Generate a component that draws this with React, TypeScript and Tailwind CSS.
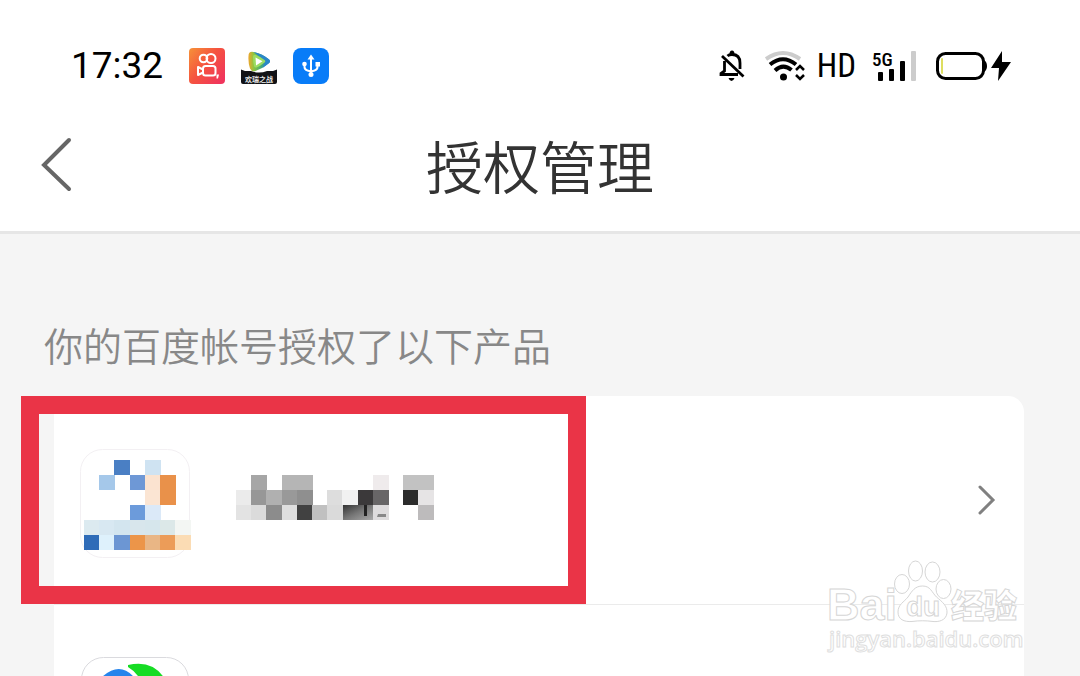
import React from "react";

type Cell = [number, number, string];

const iconCells: Cell[] = [
  [2, 0, "#4a7fc4"],
  [4, 0, "#cfe3f2"],
  [1, 1, "#a5c8ea"],
  [3, 1, "#6e98d6"],
  [4, 1, "#fbe3d0"],
  [5, 1, "#e9914a"],
  [4, 2, "#fbe5d3"],
  [5, 2, "#e9914a"],
  [3, 3, "#6c9bdb"],
  [4, 3, "#dbe9f8"],
  [0, 4, "#dceaf0"],
  [1, 4, "#d8e8f2"],
  [2, 4, "#d3e5ef"],
  [3, 4, "#d8e6ec"],
  [4, 4, "#d6e6ec"],
  [5, 4, "#dce8e8"],
  [6, 4, "#f3f6f3"],
  [0, 5, "#2f6cb8"],
  [1, 5, "#def1fc"],
  [2, 5, "#6c96d3"],
  [3, 5, "#ec9549"],
  [4, 5, "#e9b685"],
  [5, 5, "#ec9c58"],
  [6, 5, "#fbdcb4"],
];

const nameCells: Cell[] = [
  [1, 0, "#a6a6a6"],
  [3, 0, "#b5b5b5"],
  [4, 0, "#b5b5b5"],
  [9, 0, "#efebec"],
  [11, 0, "#c2c2c2"],
  [12, 0, "#c2c2c2"],
  [0, 1, "#ebebeb"],
  [1, 1, "#979797"],
  [2, 1, "#b0b0b0"],
  [3, 1, "#999999"],
  [4, 1, "#8f8f8f"],
  [6, 1, "#dddddd"],
  [7, 1, "#f1f1f1"],
  [8, 1, "#3b393a"],
  [9, 1, "#686667"],
  [11, 1, "#2c2c2c"],
  [12, 1, "#e6e4e5"],
  [0, 2, "#e3e3e3"],
  [1, 2, "#dbdbdb"],
  [2, 2, "#8c8c8c"],
  [3, 2, "#dedede"],
  [4, 2, "#414141"],
  [5, 2, "#c0c0c0"],
  [6, 2, "#dadada"],
  [9, 2, "#dedcdd"],
  [12, 2, "#bdbbbc"],
];

const StatusBar: React.FC = () => {
  return (
    <div className="flex items-center justify-between pt-11 pl-[71px] pr-[69px] text-black">
      <div className="flex items-center">
        <time className="mr-[26px] font-[Roboto,sans-serif] text-[37px] leading-[44px]">
          17:32
        </time>
        <div className="flex items-center gap-4">
          <svg width="36" height="36" viewBox="0 0 36 36" fill="none">
            <defs>
              <linearGradient id="camera" x1="0" y1="0" x2="1" y2="0.8">
                <stop offset="0" stopColor="#f69238" />
                <stop offset="0.5" stopColor="#f5533f" />
                <stop offset="1" stopColor="#f0355c" />
              </linearGradient>
            </defs>
            <rect width="36" height="36" rx="4" fill="url(#camera)" />
            <g stroke="#fff" strokeWidth="2" strokeLinejoin="round">
              <circle cx="14.500" cy="10.500" r="3.800" />
              <circle cx="22" cy="10.500" r="4.500" />
              <rect x="14" y="18" width="12.500" height="9.500" rx="2.500" />
              <path d="M14 21.500 9 19v8l5-2.500" />
            </g>
            <path d="M27.500 26.500h2.500l-1 4h-1.500z" fill="#fff" />
          </svg>
          <svg width="36" height="36" viewBox="0 0 36 36">
            <defs>
              <linearGradient id="play" x1="0" y1="0" x2="1" y2="0">
                <stop offset="0" stopColor="#f0a52c" />
                <stop offset="0.25" stopColor="#8cc63f" />
                <stop offset="0.6" stopColor="#43a879" />
                <stop offset="1" stopColor="#2284cc" />
              </linearGradient>
            </defs>
            <path
              d="M7.500 8q0-5 5-4 9 2 15 7 3 2 0 4.500-6 5-13 7.500-4 1-5.500-2.500-2-6-1.500-12.500z"
              fill="url(#play)"
            />
            <path d="M12.500 4q9 2 15 7 3 2 0 4.500-3 2.500-6 4.500l3-7z" fill="#2a86c8" />
            <path d="M12 9q0-3 3-2 5 2 8.500 5 1.500 1 0 2.500-4 3.500-8 5-2 .500-2.500-1.500-1-4-1-9z" fill="#9bdc62" />
            <path d="M14.500 9.500 21.500 13.200 15 17.500z" fill="#fff" />
            <path d="M0 21.500l4 1.500h6q8 3 16 0h6l4-1.500v12.500q0 2-2 2H2q-2 0-2-2z" fill="#111216" />
            <text
              x="18"
              y="33.500"
              textAnchor="middle"
              fontSize="7"
              fontWeight="700"
              fill="#e8e8e8"
              fontFamily="'Noto Sans CJK SC', sans-serif"
            >
              欢瑞之战
            </text>
          </svg>
          <svg width="36" height="36" viewBox="0 0 36 36" fill="none">
            <rect width="36" height="36" rx="8" fill="#087cf8" />
            <path
              d="M18 10v16M11.500 16v3q0 2.500 3 3.500l3.500 1M24.500 16v3q0 2.500-3 3.500L18 23.500"
              stroke="#fff"
              strokeWidth="2"
            />
            <path d="M18 6.500l3.500 5h-7z" fill="#fff" />
            <circle cx="11.500" cy="16" r="2.300" fill="#fff" />
            <rect x="22.500" y="14" width="4.500" height="4.500" fill="#fff" />
            <circle cx="18" cy="26.500" r="2.500" fill="#fff" />
          </svg>
        </div>
      </div>

      <div className="flex items-center">
        <svg width="26" height="32" viewBox="0 0 26 32" fill="none">
          <path
            d="M5.500 11v10L2 23.500v1h17M8.500 6Q10 4.500 13 4.500q8 0 8 8.500v6"
            stroke="#000"
            strokeWidth="2.800"
          />
          <path d="M3 6 24.500 26.500" stroke="#000" strokeWidth="2.800" />
          <path d="M10.500 4q0-3.500 2.500-3.500t2.500 3.500zM9.500 28h6q-1 3-3 3t-3-3z" fill="#000" />
        </svg>
        <svg className="ml-5" width="40" height="32" viewBox="0 0 40 32" fill="none">
          <path d="M1 9Q18-3 35 9" stroke="#ccc" strokeWidth="4" />
          <path d="M5 14.500Q18 4 31 14.500" stroke="#000" strokeWidth="4" />
          <path d="M10 20.500Q18 13 26.500 20" stroke="#000" strokeWidth="4" />
          <circle cx="18.500" cy="27" r="3.500" fill="#000" />
          <path
            d="M31 20l4-4 4 4M31 25l4 4 4-4"
            stroke="#000"
            strokeWidth="2.500"
          />
        </svg>
        <span className="ml-3 font-['Roboto_Condensed',Roboto,sans-serif] text-[33px] leading-9">
          HD
        </span>
        <svg className="ml-4" width="45" height="38" viewBox="0 -3 45 38">
          <text
            x="0"
            y="16"
            fontSize="19"
            fontWeight="500"
            fontFamily="'Roboto Condensed', Roboto, sans-serif"
          >
            5G
          </text>
          <rect x="6" y="22" width="5" height="9" rx="1" />
          <rect x="17" y="19" width="5" height="12" rx="1" />
          <rect x="28" y="11" width="5" height="20" rx="1" />
          <rect x="39" y="1" width="5" height="30" rx="1" fill="#ccc" />
        </svg>
        <svg className="ml-[18px]" width="76" height="32" viewBox="0 0 76 32">
          <rect
            x="2.500"
            y="3.500"
            width="46"
            height="25"
            rx="8"
            fill="none"
            stroke="#000"
            strokeWidth="3"
          />
          <rect x="6" y="8" width="2" height="16" rx="1" fill="#dede60" />
          <path d="M49 10q3 2 3 6t-3 6z" />
          <path d="M67 1 56 18h8l-1 13 13-19h-9z" />
        </svg>
      </div>
    </div>
  );
};

const Mosaic: React.FC<{ cells: Cell[]; x: number; y: number }> = ({
  cells,
  x,
  y,
}) => {
  return (
    <g shapeRendering="crispEdges">
      {cells.map(([col, row, color]) => (
        <rect
          key={`${col}-${row}`}
          x={x + Math.round(col * 15.2)}
          y={y + row * 15}
          width="16"
          height="15"
          fill={color}
        />
      ))}
    </g>
  );
};

const Watermark: React.FC = () => {
  return (
    <svg
      className="absolute right-[55px] top-[325px]"
      width="200"
      height="100"
      viewBox="0 0 200 100"
      fill="#fff"
      stroke="#d6d6d6"
      strokeWidth="1"
    >
      <g
        fontFamily="'Liberation Sans', 'Noto Sans CJK SC', sans-serif"
        fontWeight="700"
      >
        <text x="2" y="61" fontSize="45">
          Bai
        </text>
        <ellipse cx="77" cy="25" rx="7.500" ry="9.500" />
        <ellipse cx="90.500" cy="12" rx="7" ry="10" />
        <ellipse cx="107.500" cy="13" rx="7.500" ry="10" />
        <ellipse cx="118.500" cy="30" rx="7.500" ry="9.500" />
        <path d="M97.500 27c8 0 9 6 14 11 6 5 11 9 10.500 16-1 8-9 9-14 8.500-7-1-14-1-21 0-8 .500-14-2-14-9.500s6-10 10-15c4-6 7-11 14.500-11z" />
        <text x="81" y="57" fontSize="28">
          du
        </text>
        <text
          x="126"
          y="59"
          fontSize="33"
          fontWeight="900"
          fontFamily="'Noto Sans CJK SC', sans-serif"
        >
          经验
        </text>
      </g>
      <text
        x="4"
        y="88"
        fontSize="22"
        fontWeight="600"
        stroke="#dedede"
        fontFamily="'Open Sans', sans-serif"
      >
        jingyan.baidu.com
      </text>
    </svg>
  );
};

const App: React.FC = () => {
  return (
    <div className="flex h-screen flex-col overflow-hidden bg-[#f5f5f5] font-['Noto_Sans_CJK_SC',sans-serif]">
      <header className="border-b-3 border-[#e6e6e6] bg-white">
        <StatusBar />
        <div className="grid h-[143px] grid-cols-[1fr_auto_1fr] items-center pt-2 pl-10">
          <button className="justify-self-start" aria-label="返回">
            <svg width="34" height="56" viewBox="0 0 34 56" fill="none">
              <path
                d="M29 4 4 29 29 53"
                stroke="#666"
                strokeWidth="4"
                strokeLinecap="round"
              />
            </svg>
          </button>
          <h1 className="pr-10 text-[57px] leading-[80px] font-[350] text-[#333]">
            授权管理
          </h1>
        </div>
      </header>

      <main className="relative flex-1 pt-20">
        <h2 className="pl-11 text-[39px] leading-[60px] font-[350] text-[#888]">
          你的百度帐号授权了以下产品
        </h2>
        <ul className="mt-[22px] mr-14 ml-[54px] rounded-t-2xl bg-white">
          <li className="relative border-b border-[#ebebeb]">
            <a
              href="#product"
              aria-label="产品授权详情"
              className="flex h-[208px] items-center pr-7 pl-[26px]"
            >
              <svg width="114" height="118" viewBox="0 -8 114 118">
                <rect
                  x="0.500"
                  y="0.500"
                  width="109"
                  height="108"
                  rx="22"
                  fill="#fff"
                  stroke="#f3f0f3"
                />
                <Mosaic cells={iconCells} x={4} y={11} />
              </svg>
              <svg className="ml-[42px]" width="200" height="50" viewBox="0 0 200 50">
                <defs>
                  <linearGradient id="smudge" x1="0" y1="0" x2="1" y2="1">
                    <stop offset="0" stopColor="#333" />
                    <stop offset="0.5" stopColor="#777" />
                    <stop offset="1" stopColor="#aaa" />
                  </linearGradient>
                </defs>
                <Mosaic cells={nameCells} x={0} y={0} />
                <rect x="107" y="30" width="30" height="15" fill="url(#smudge)" />
                <path d="M128 30h3v11h-3z" fill="#222" />
                <path d="M142 39h8v3h-9z" fill="#888" />
              </svg>
              <svg className="ml-auto" width="20" height="32" viewBox="0 0 20 32" fill="none">
                <path
                  d="M4 3 17 16 4 29"
                  stroke="#808080"
                  strokeWidth="3"
                  strokeLinecap="round"
                />
              </svg>
            </a>
            <div className="pointer-events-none absolute top-0 -left-[33px] h-[208px] w-[565px] border-18 border-[#ea3447]"></div>
          </li>
          <li>
            <a
              href="#drive"
              aria-label="产品授权详情"
              className="flex h-[208px] items-center pl-[26px]"
            >
              <svg width="110" height="104" viewBox="0 0 110 104" fill="none">
                <rect
                  x="1.500"
                  y="0.500"
                  width="107"
                  height="102"
                  rx="22"
                  fill="#fff"
                  stroke="#dadade"
                />
                <path d="M18 24Q40 0 57 24L50 50z" fill="#2584ec" />
                <path d="M48 8Q74 2 86 24L70 40 60 22Q55 14 48 10z" fill="#16dc24" />
              </svg>
            </a>
          </li>
        </ul>
        <Watermark />
      </main>
    </div>
  );
};

export default App;
